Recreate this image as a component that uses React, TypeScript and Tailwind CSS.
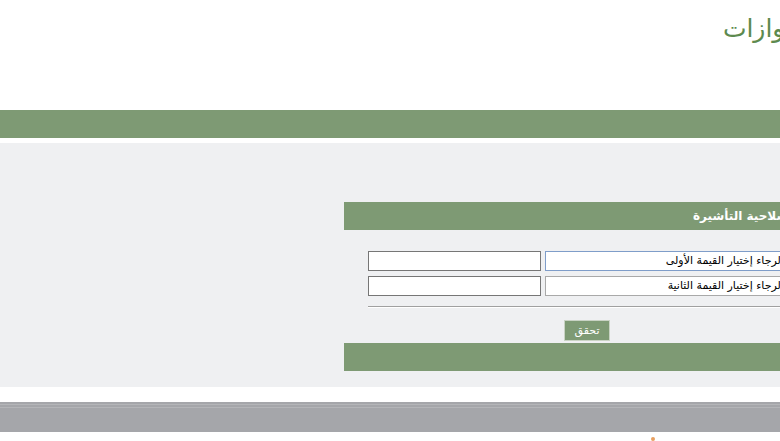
export default function App() {
  return (
    <div className="w-[780px] h-[441px] overflow-hidden bg-white relative">
      <div dir="rtl" className="w-[800px] font-['DejaVu_Sans',sans-serif]">
        {/* Title */}
        <div className="h-[110px] pt-[12px] -mr-[16px]">
          <h1 className="text-[25px] leading-[34px] text-[#5d8a4f] font-normal">الجوازات</h1>
        </div>

        {/* Top green bar */}
        <div className="h-[28px] bg-[#7e9a74]" />

        {/* Main panel */}
        <div className="mt-[5px] bg-[#eff0f2] pt-[59px] pb-[16px]">
          <div className="ml-[344px] w-[456px]">
            <div className="h-[28px] bg-[#7e9a74] flex items-center pr-[12px]">
              <span className="text-white text-[12px] font-bold">صلاحية التأشيرة</span>
            </div>

            <div className="pt-[21px] pr-[12px] pl-[24px] flex flex-col gap-[5px]">
              <div className="flex gap-[4px]">
                <div className="w-[243px] h-[20px] bg-white border border-[#7f9dc9] flex items-center pr-[3px] text-[11px] text-black">
                  الرجاء إختيار القيمة الأولى
                </div>
                <div className="w-[173px] h-[20px] bg-white border border-[#767676]" />
              </div>
              <div className="flex gap-[4px]">
                <div className="w-[243px] h-[20px] bg-white border border-[#a9a9a9] flex items-center pr-[3px] text-[11px] text-black">
                  الرجاء إختيار القيمة الثانية
                </div>
                <div className="w-[173px] h-[20px] bg-white border border-[#767676]" />
              </div>
            </div>

            <div className="mt-[10px] mr-[12px] ml-[24px] h-[2px] border-t border-[#a0a0a0] bg-white" />

            <div className="flex justify-center pt-[12px] pb-[2px] pl-[30px]">
              <button className="w-[46px] h-[21px] bg-[#7e9a74] border border-[#c9d3c4] text-white text-[11px] leading-none">
                تحقق
              </button>
            </div>

            <div className="h-[28px] bg-[#7e9a74]" />
          </div>
        </div>

        {/* Gray bar */}
        <div className="mt-[15px] h-[30px] bg-[#a5a6aa] pt-[2px]">
          <div className="h-[1px] bg-[#b4b5b8]" />
          <div className="h-[1px] mt-[2px] bg-[#b4b5b8]" />
        </div>

        <div className="h-[9px] relative">
          <div className="absolute top-[5px] left-[651px] w-[4px] h-[4px] rounded-full bg-[#e8a060]" />
        </div>
      </div>
    </div>
  );
}
